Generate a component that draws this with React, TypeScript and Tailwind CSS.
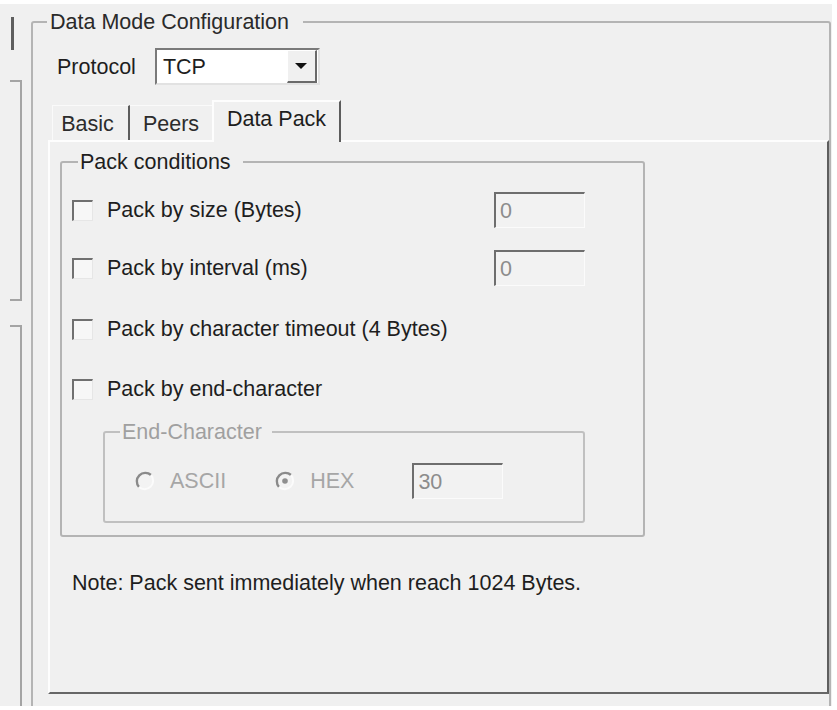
import React from "react";

const Checkbox: React.FC = () => (
  <div className="w-[21px] h-[21px] shrink-0 bg-[#f7f7f7] border-t-2 border-l-2 border-[#707070] border-r border-b border-r-[#e6e6e6] border-b-[#e6e6e6]" />
);

const Radio: React.FC<{ checked?: boolean }> = ({ checked }) => (
  <svg width="20" height="20" viewBox="0 0 20 20" className="shrink-0">
    <circle cx="10" cy="10" r="8" fill="#f3f3f3" />
    <path d="M16 4 A8.5 8.5 0 0 0 4 16" stroke="#8a8a8a" strokeWidth="2.4" fill="none" />
    <path d="M4 16 A8.5 8.5 0 0 0 16 4" stroke="#fbfbfb" strokeWidth="2" fill="none" />
    {checked && <circle cx="10" cy="10" r="2.8" fill="#8f8f8f" />}
  </svg>
);

// sunken, disabled edit box
const EditBox: React.FC<{ value: string; className?: string }> = ({ value, className }) => (
  <div
    className={
      "w-[91px] h-[36px] shrink-0 bg-[#f2f2f2] border-t-2 border-l-2 border-[#6e6e6e] border-r border-b border-r-[#fbfbfb] border-b-[#fbfbfb] pl-[4px] flex items-center text-[#8c8c8c] " +
      (className ?? "")
    }
  >
    {value}
  </div>
);

const conditionRows = [
  { label: "Pack by size (Bytes)", value: "0", mt: "mt-[18px]" },
  { label: "Pack by interval (ms)", value: "0", mt: "mt-[22px]" },
  { label: "Pack by character timeout (4 Bytes)", value: null, mt: "mt-[25px]" },
  { label: "Pack by end-character", value: null, mt: "mt-[24px]" },
];

export default function App() {
  return (
    <div className="w-[837px] h-[710px] bg-white overflow-hidden font-['Liberation_Sans',Arial,sans-serif] text-[21.5px] leading-[24px] text-[#1e1e1e]">
      <div className="mt-[4px] w-[832px] h-[702px] bg-[#f0f0f0] flex overflow-hidden">
        {/* Left edge: bits of neighbouring panels */}
        <div className="w-[31px] shrink-0 flex flex-col">
          <div className="mt-[13px] ml-[11px] w-[3px] h-[35px] bg-[#5e5e5e]" />
          <div className="mt-[30px] ml-[10px] w-[12px] h-[232px] border-t-2 border-r-2 border-b-2 border-[#a4a4a4]" />
          <div className="mt-[24px] ml-[10px] w-[12px] h-[400px] border-t-2 border-r-2 border-[#a4a4a4]" />
        </div>

        {/* Data Mode Configuration group */}
        <fieldset className="mt-[6px] w-[800px] h-[720px] shrink-0 border-2 border-[#b4b4b4] rounded-[3px]">
          <legend className="ml-[14px] pl-[3px] pr-[14px] text-[#2a2a2a]">Data Mode Configuration</legend>

          <div className="mt-[14px] pl-[24px] flex items-center">
            <span>Protocol</span>
            <div className="ml-[19px] w-[165px] h-[37px] bg-white flex items-center border-t-2 border-l-2 border-[#7a7a7a] border-r-2 border-b-2 border-r-[#e2e2e2] border-b-[#e2e2e2]">
              <span className="flex-1 pl-[6px]">TCP</span>
              <div className="w-[30px] h-[33px] mr-[1px] bg-[#f0f0f0] border-t border-l border-white border-r-2 border-b-2 border-r-[#6a6a6a] border-b-[#6a6a6a] flex items-center justify-center">
                <svg width="12" height="7" viewBox="0 0 12 7">
                  <polygon points="0,0 12,0 6,6" fill="#111" />
                </svg>
              </div>
            </div>
          </div>

          {/* Tabs */}
          <div className="mt-[15px] ml-[15px] pl-[4px] h-[40px] flex items-end">
            <div className="w-[78px] h-[35px] border-t border-l border-[#fafafa] border-r-2 border-r-[#5c5c5c] flex items-center justify-center pr-[6px] pt-[2px] text-[#2c2c2c]">
              Basic
            </div>
            <div className="w-[82px] h-[35px] border-t border-[#fafafa] flex items-center justify-center pt-[2px] text-[#2c2c2c]">
              Peers
            </div>
            <div className="relative z-10 -mb-[2px] w-[129px] h-[42px] bg-[#f0f0f0] border-t-2 border-l-2 border-[#fdfdfd] border-r-2 border-r-[#5c5c5c] flex items-center justify-center pb-[6px]">
              Data Pack
            </div>
          </div>

          {/* Tab page */}
          <div className="ml-[15px] w-[781px] h-[554px] border-t-2 border-l-2 border-[#fdfdfd] border-r-2 border-b-2 border-r-[#5e5e5e] border-b-[#666666]">
            <fieldset className="mt-[8px] ml-[10px] w-[585px] h-[387px] border-2 border-[#b4b4b4] rounded-[3px]">
              <legend className="ml-[16px] pl-[2px] pr-[12px]">Pack conditions</legend>

              {conditionRows.map((row) => (
                <div key={row.label} className={row.mt + " h-[36px] pl-[10px] flex items-center"}>
                  <Checkbox />
                  <span className="ml-[14px] flex-1">{row.label}</span>
                  {row.value !== null && <EditBox value={row.value} className="mr-[58px]" />}
                </div>
              ))}

              <fieldset className="mt-[13px] ml-[41px] w-[482px] h-[103px] border-2 border-[#c0c0c0] rounded-[3px]">
                <legend className="ml-[15px] pl-[2px] pr-[10px] text-[#a0a0a0]">End-Character</legend>
                <div className="mt-[19px] h-[36px] pl-[30px] flex items-center text-[#a6a6a6]">
                  <Radio />
                  <span className="ml-[15px]">ASCII</span>
                  <div className="ml-[49px]">
                    <Radio checked />
                  </div>
                  <span className="ml-[15px]">HEX</span>
                  <EditBox value="30" className="ml-[58px]" />
                </div>
              </fieldset>
            </fieldset>

            <p className="mt-[34px] pl-[22px]">Note: Pack sent immediately when reach 1024 Bytes.</p>
          </div>
        </fieldset>
      </div>
    </div>
  );
}
